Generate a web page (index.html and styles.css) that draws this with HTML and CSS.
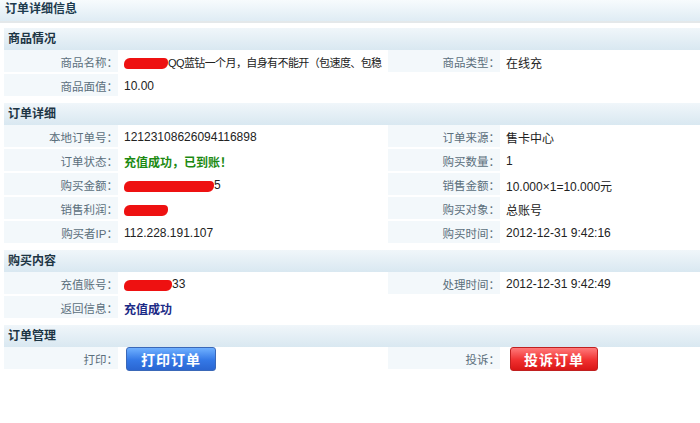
FILE: index.html
```html
<!DOCTYPE html>
<html lang="zh-CN">
<head>
  <meta charset="utf-8">
  <title>订单详细信息</title>
  <link rel="stylesheet" href="styles.css">
</head>
<body>
  <div class="title-bar">订单详细信息</div>

  <div class="wrap">
    <div class="section">
      <div class="sec-head">商品情况</div>
      <div class="grid">
        <div class="lbl">商品名称：</div>
        <div class="val"><span class="redact" style="width:44px"></span><span class="name">QQ蓝钻一个月，自身有不能开（包速度、包稳</span></div>
        <div class="lbl">商品类型：</div>
        <div class="val">在线充</div>

        <div class="lbl">商品面值：</div>
        <div class="val">10.00</div>
        <div class="blank"></div>
        <div class="blank"></div>
      </div>
    </div>

    <div class="section">
      <div class="sec-head">订单详细</div>
      <div class="grid">
        <div class="lbl">本地订单号：</div>
        <div class="val">12123108626094116898</div>
        <div class="lbl">订单来源：</div>
        <div class="val">售卡中心</div>

        <div class="lbl">订单状态：</div>
        <div class="val"><span class="ok">充值成功，已到账！</span></div>
        <div class="lbl">购买数量：</div>
        <div class="val">1</div>

        <div class="lbl">购买金额：</div>
        <div class="val"><span class="redact" style="width:90px"></span>5</div>
        <div class="lbl">销售金额：</div>
        <div class="val">10.000×1=10.000元</div>

        <div class="lbl">销售利润：</div>
        <div class="val"><span class="redact" style="width:44px"></span></div>
        <div class="lbl">购买对象：</div>
        <div class="val">总账号</div>

        <div class="lbl">购买者IP：</div>
        <div class="val">112.228.191.107</div>
        <div class="lbl">购买时间：</div>
        <div class="val">2012-12-31 9:42:16</div>
      </div>
    </div>

    <div class="section">
      <div class="sec-head">购买内容</div>
      <div class="grid">
        <div class="lbl">充值账号：</div>
        <div class="val"><span class="redact" style="width:48px"></span>33</div>
        <div class="lbl">处理时间：</div>
        <div class="val">2012-12-31 9:42:49</div>

        <div class="lbl">返回信息：</div>
        <div class="val"><span class="info">充值成功</span></div>
        <div class="blank"></div>
        <div class="blank"></div>
      </div>
    </div>

    <div class="section">
      <div class="sec-head">订单管理</div>
      <div class="grid">
        <div class="lbl">打印：</div>
        <div class="val"><button class="btn btn-blue">打印订单</button></div>
        <div class="lbl">投诉：</div>
        <div class="val"><button class="btn btn-red">投诉订单</button></div>
      </div>
    </div>
  </div>
</body>
</html>
```

FILE: styles.css
```css
body,
html {
  margin: 0;
  padding: 0;
  background: #ffffff;
  font-family: "Liberation Sans", "Noto Sans CJK SC", sans-serif;
  font-size: 12px;
  color: #222222;
}

.title-bar {
  height: 21px;
  line-height: 19px;
  padding-left: 5px;
  font-weight: bold;
  color: #1d3b4e;
  background: linear-gradient(to bottom, #f7fbfd, #dfecf4);
  border-bottom: 2px solid #e4e8ea;
}

.wrap {
  padding: 5px 0 0 4px;
}

.section {
  margin-bottom: 5px;
}

.sec-head {
  height: 22px;
  line-height: 22px;
  padding-left: 4px;
  font-weight: bold;
  color: #1d3544;
  background: linear-gradient(to bottom, #f0f6fa, #d9e8f1);
}

.grid {
  display: grid;
  grid-template-columns: 114px 270px 112px 1fr;
  grid-auto-rows: 24px;
}

.lbl {
  background: #f3f8fb;
  color: #5b6f7c;
  font-size: 11.5px;
  margin-bottom: 2px;
  white-space: nowrap;
  display: flex;
  align-items: center;
  justify-content: flex-end;
  padding-top: 1px;
}

.val {
  padding-left: 6px;
  white-space: nowrap;
  display: flex;
  align-items: center;
  min-width: 0;
}

.name {
  font-size: 11px;
  letter-spacing: -0.6px;
}

.redact {
  display: inline-block;
  flex-shrink: 0;
  height: 11px;
  background: #ee1111;
  border-radius: 6px 4px 6px 4px;
  margin-top: 3px;
}

.ok {
  color: #1c8a12;
  font-weight: bold;
}

.info {
  color: #1b2a86;
  font-weight: bold;
}

.btn {
  height: 24px;
  padding: 0;
  border-radius: 3px;
  color: #ffffff;
  font-family: "Noto Sans CJK SC", sans-serif;
  font-size: 14px;
  font-weight: bold;
  letter-spacing: 1px;
  cursor: pointer;
}

.btn-blue {
  width: 90px;
  margin-left: 2px;
  border: 1px solid #3a68b8;
  background: linear-gradient(to bottom, #6fb0ff, #3478e6 55%, #2a66d2);
}

.btn-red {
  width: 88px;
  margin-left: 4px;
  border: 1px solid #c02020;
  background: linear-gradient(to bottom, #ff7a7a, #f03030 55%, #d91616);
}
```
